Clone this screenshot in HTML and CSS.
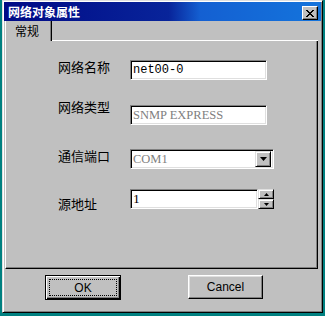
FILE: index.html
```html
<!DOCTYPE html>
<html lang="zh-CN">
  <head>
    <meta charset="UTF-8" />
    <title>网络对象属性</title>
    <link rel="stylesheet" href="styles.css">
  </head>
  <body>
    <div class="window">
      <div class="title-bar">
        <span class="title-text">网络对象属性</span>
        <button class="close-btn" aria-label="关闭">
          <svg width="8" height="7" viewBox="0 0 8 7">
            <path d="M0 0h2v1h1v1h2V1h1V0h2v1H7v1H6v1H5v1h1v1h1v1h1v1H6V6H5V5H3v1H2v1H0V6h1V5h1V4h1V3H2V2H1V1H0z" fill="#000"/>
          </svg>
        </button>
      </div>

      <div class="tabs">
        <div class="tab">常规</div>
        <div class="tab-fill"></div>
      </div>

      <div class="panel">
        <div class="row row-1">
          <label class="label">网络名称</label>
          <div class="field text-field">net00-0</div>
        </div>
        <div class="row row-2">
          <label class="label">网络类型</label>
          <div class="field text-field disabled serif">SNMP EXPRESS</div>
        </div>
        <div class="row row-3">
          <label class="label">通信端口</label>
          <div class="field combo">
            <span class="combo-value disabled serif">COM1</span>
            <span class="combo-btn">
              <svg width="7" height="4" viewBox="0 0 7 4"><path d="M0 0h7L3.5 4z" fill="#000"/></svg>
            </span>
          </div>
        </div>
        <div class="row row-4">
          <label class="label">源地址</label>
          <div class="field spin-field serif">1</div>
          <div class="spin">
            <span class="spin-btn">
              <svg width="5" height="3" viewBox="0 0 5 3"><path d="M2.5 0L5 3H0z" fill="#000"/></svg>
            </span>
            <span class="spin-btn">
              <svg width="5" height="3" viewBox="0 0 5 3"><path d="M0 0h5L2.5 3z" fill="#000"/></svg>
            </span>
          </div>
        </div>
      </div>

      <div class="buttons">
        <button class="btn btn-default"><span class="focus">OK</span></button>
        <button class="btn">Cancel</button>
      </div>
    </div>
  </body>
</html>
```

FILE: styles.css
```css
body {
  margin: 0;
  width: 325px;
  height: 316px;
  overflow: hidden;
  background-color: #008080;
  font-family: "Liberation Sans", "Noto Sans CJK SC", sans-serif;
}
.window {
  box-sizing: border-box;
  width: 321px;
  height: 313px;
  margin-left: 2px;
  padding: 1px;
  background: #c0c0c0;
  border: 1px solid;
  border-color: #dfdfdf #000 #000 #dfdfdf;
  box-shadow: inset 1px 1px #fff, inset -1px -1px #808080;
}
.title-bar {
  display: flex;
  align-items: center;
  justify-content: space-between;
  height: 19px;
  padding: 0 3px 0 4px;
  background: linear-gradient(to right, #000a86 0%, #08249a 52%, #1460d2 62%, #1474dc 100%);
}
.title-text {
  color: #fff;
  font-family: "Noto Sans CJK SC", sans-serif;
  font-size: 12px;
  font-weight: bold;
  line-height: 12px;
}
.close-btn {
  display: flex;
  align-items: center;
  justify-content: center;
  box-sizing: border-box;
  width: 16px;
  height: 14px;
  margin-top: 3px;
  padding: 0;
  background: #c0c0c0;
  border: 1px solid;
  border-color: #fff #000 #000 #fff;
  box-shadow: inset -1px -1px #808080;
}
.tabs {
  display: flex;
  height: 20px;
}
.tab {
  box-sizing: border-box;
  width: 47px;
  margin-left: 1px;
  padding: 4px 0 0 9px;
  border-left: 1px solid #fff;
  border-right: 1px solid #000;
  box-shadow: inset -1px 0 #808080;
  font-family: "Noto Sans CJK SC", sans-serif;
  font-size: 12px;
  line-height: 12px;
}
.tab-fill {
  flex: 1;
  margin-right: 3px;
  border-bottom: 1px solid #fff;
}
.panel {
  box-sizing: border-box;
  height: 228px;
  margin: 0 3px 0 1px;
  padding: 19px 0 0 52px;
  border-left: 1px solid #fff;
  border-right: 1px solid #000;
  border-bottom: 1px solid #000;
  box-shadow: inset -1px -1px #808080;
}
.row {
  display: flex;
  align-items: flex-start;
  height: 20px;
}
.row-2 { margin-top: 25px; }
.row-3 { margin-top: 24px; }
.row-4 { margin-top: 20px; }
.label {
  width: 72px;
  margin-top: 0;
  font-family: "Noto Sans CJK SC", sans-serif;
  font-size: 13px;
  line-height: 13px;
}
.row-2 .label { margin-top: -5px; }
.row-4 .label { margin-top: 8px; }
.field {
  box-sizing: border-box;
  height: 20px;
  background: #fff;
  border: 1px solid;
  border-color: #808080 #fff #fff #808080;
  box-shadow: inset 1px 1px #000, inset -1px -1px #dfdfdf;
  font-family: "Liberation Mono", monospace;
  font-size: 12px;
  line-height: 18px;
}
.text-field {
  width: 137px;
  padding-left: 2px;
}
.serif {
  font-family: "Liberation Serif", serif;
  font-size: 12.5px;
}
.disabled {
  color: #808080;
}
.combo {
  display: flex;
  width: 144px;
  padding: 1px 2px 1px 2px;
}
.combo-value {
  flex: 1;
  line-height: 16px;
}
.combo-btn,
.spin-btn {
  display: flex;
  align-items: center;
  justify-content: center;
  box-sizing: border-box;
  background: #c0c0c0;
  border: 1px solid;
  border-color: #dfdfdf #000 #000 #dfdfdf;
  box-shadow: inset 1px 1px #fff, inset -1px -1px #808080;
}
.combo-btn {
  width: 16px;
  height: 16px;
}
.spin-field {
  width: 128px;
  padding-left: 2px;
  font-size: 13.5px;
}
.spin {
  display: flex;
  flex-direction: column;
  width: 16px;
}
.spin-btn {
  height: 10px;
}
.buttons {
  display: flex;
  align-items: flex-start;
  gap: 67px;
  margin-top: 6px;
  padding-left: 41px;
}
.btn {
  box-sizing: border-box;
  width: 75px;
  height: 24px;
  padding: 0;
  background: #c0c0c0;
  border: 1px solid;
  border-color: #fff #000 #000 #fff;
  box-shadow: inset -1px -1px #808080, inset 1px 1px #dfdfdf;
  font-family: "Liberation Sans", sans-serif;
  font-size: 12px;
  color: #000;
}
.btn-default {
  width: 76px;
  height: 25px;
  padding: 3px;
  border: 1px solid #000;
  box-shadow: inset 1px 1px #fff, inset -1px -1px #000, inset -2px -2px #808080;
}
.focus {
  display: flex;
  align-items: center;
  justify-content: center;
  height: 100%;
  box-sizing: border-box;
  border: 1px dotted #000;
}
```
